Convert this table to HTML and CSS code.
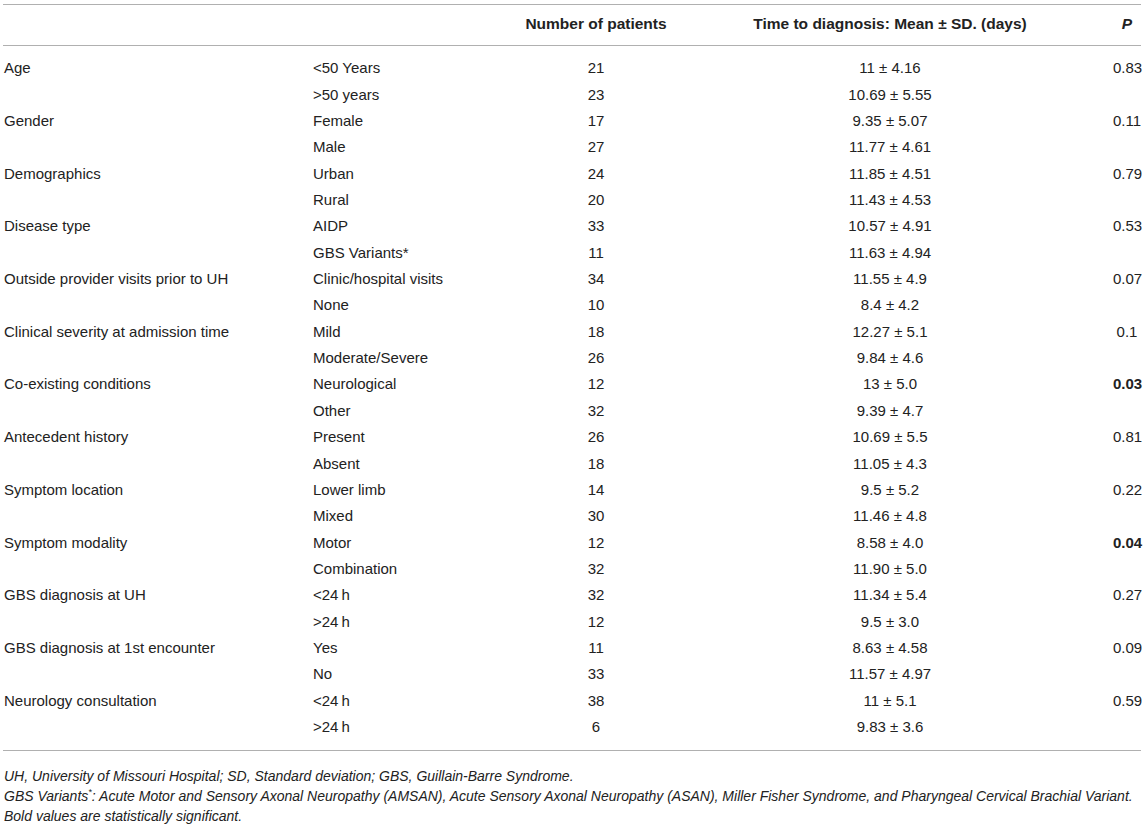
FILE: index.html
```html
<!DOCTYPE html>
<html><head>
<meta charset="utf-8">
<title>Time to diagnosis</title>
<link rel="stylesheet" href="styles.css">
</head>
<body>
<table class="tbl">
  <colgroup>
    <col class="c1"><col class="c2"><col class="c3"><col class="c4"><col class="c5">
  </colgroup>
  <thead>
    <tr><th></th><th></th><th class="ctr">Number of patients</th><th class="ctr">Time to diagnosis: Mean &plusmn; SD. (days)</th><th class="ctr"><i>P</i></th></tr>
  </thead>
  <tbody>
    <tr class="first"><td>Age</td><td>&lt;50 Years</td><td class="ctr">21</td><td class="ctr">11 &plusmn; 4.16</td><td class="ctr">0.83</td></tr>
    <tr><td></td><td>&gt;50 years</td><td class="ctr">23</td><td class="ctr">10.69 &plusmn; 5.55</td><td></td></tr>
    <tr><td>Gender</td><td>Female</td><td class="ctr">17</td><td class="ctr">9.35 &plusmn; 5.07</td><td class="ctr">0.11</td></tr>
    <tr><td></td><td>Male</td><td class="ctr">27</td><td class="ctr">11.77 &plusmn; 4.61</td><td></td></tr>
    <tr><td>Demographics</td><td>Urban</td><td class="ctr">24</td><td class="ctr">11.85 &plusmn; 4.51</td><td class="ctr">0.79</td></tr>
    <tr><td></td><td>Rural</td><td class="ctr">20</td><td class="ctr">11.43 &plusmn; 4.53</td><td></td></tr>
    <tr><td>Disease type</td><td>AIDP</td><td class="ctr">33</td><td class="ctr">10.57 &plusmn; 4.91</td><td class="ctr">0.53</td></tr>
    <tr><td></td><td>GBS Variants*</td><td class="ctr">11</td><td class="ctr">11.63 &plusmn; 4.94</td><td></td></tr>
    <tr><td>Outside provider visits prior to UH</td><td>Clinic/hospital visits</td><td class="ctr">34</td><td class="ctr">11.55 &plusmn; 4.9</td><td class="ctr">0.07</td></tr>
    <tr><td></td><td>None</td><td class="ctr">10</td><td class="ctr">8.4 &plusmn; 4.2</td><td></td></tr>
    <tr><td>Clinical severity at admission time</td><td>Mild</td><td class="ctr">18</td><td class="ctr">12.27 &plusmn; 5.1</td><td class="ctr">0.1</td></tr>
    <tr><td></td><td>Moderate/Severe</td><td class="ctr">26</td><td class="ctr">9.84 &plusmn; 4.6</td><td></td></tr>
    <tr><td>Co-existing conditions</td><td>Neurological</td><td class="ctr">12</td><td class="ctr">13 &plusmn; 5.0</td><td class="ctr"><b>0.03</b></td></tr>
    <tr><td></td><td>Other</td><td class="ctr">32</td><td class="ctr">9.39 &plusmn; 4.7</td><td></td></tr>
    <tr><td>Antecedent history</td><td>Present</td><td class="ctr">26</td><td class="ctr">10.69 &plusmn; 5.5</td><td class="ctr">0.81</td></tr>
    <tr><td></td><td>Absent</td><td class="ctr">18</td><td class="ctr">11.05 &plusmn; 4.3</td><td></td></tr>
    <tr><td>Symptom location</td><td>Lower limb</td><td class="ctr">14</td><td class="ctr">9.5 &plusmn; 5.2</td><td class="ctr">0.22</td></tr>
    <tr><td></td><td>Mixed</td><td class="ctr">30</td><td class="ctr">11.46 &plusmn; 4.8</td><td></td></tr>
    <tr><td>Symptom modality</td><td>Motor</td><td class="ctr">12</td><td class="ctr">8.58 &plusmn; 4.0</td><td class="ctr"><b>0.04</b></td></tr>
    <tr><td></td><td>Combination</td><td class="ctr">32</td><td class="ctr">11.90 &plusmn; 5.0</td><td></td></tr>
    <tr><td>GBS diagnosis at UH</td><td>&lt;24&#8201;h</td><td class="ctr">32</td><td class="ctr">11.34 &plusmn; 5.4</td><td class="ctr">0.27</td></tr>
    <tr><td></td><td>&gt;24&#8201;h</td><td class="ctr">12</td><td class="ctr">9.5 &plusmn; 3.0</td><td></td></tr>
    <tr><td>GBS diagnosis at 1st encounter</td><td>Yes</td><td class="ctr">11</td><td class="ctr">8.63 &plusmn; 4.58</td><td class="ctr">0.09</td></tr>
    <tr><td></td><td>No</td><td class="ctr">33</td><td class="ctr">11.57 &plusmn; 4.97</td><td></td></tr>
    <tr><td>Neurology consultation</td><td>&lt;24&#8201;h</td><td class="ctr">38</td><td class="ctr">11 &plusmn; 5.1</td><td class="ctr">0.59</td></tr>
    <tr class="last"><td></td><td>&gt;24&#8201;h</td><td class="ctr">6</td><td class="ctr">9.83 &plusmn; 3.6</td><td></td></tr>
  </tbody>
</table>
<div class="notes">
  <p>UH, University of Missouri Hospital; SD, Standard deviation; GBS, Guillain-Barre Syndrome.</p>
  <p>GBS Variants<sup>*</sup>: Acute Motor and Sensory Axonal Neuropathy (AMSAN), Acute Sensory Axonal Neuropathy (ASAN), Miller Fisher Syndrome, and Pharyngeal Cervical Brachial Variant.</p>
  <p>Bold values are statistically significant.</p>
</div>
</body>
</html>
```

FILE: styles.css
```css
body {
  margin: 0;
  padding: 4px 4px 0 3px;
  background: #fff;
  color: #222;
  font-family: "Liberation Sans", Arial, sans-serif;
  font-size: 15px;
}

.tbl {
  width: 1138px;
  border-collapse: collapse;
  table-layout: fixed;
}
.c1 { width: 310px; }
.c2 { width: 212px; }
.c3 { width: 142px; }
.c4 { width: 446px; }
.c5 { width: 28px; }

.tbl th, .tbl td {
  padding: 0;
  text-align: left;
  white-space: nowrap;
  font-weight: normal;
}
.tbl td:first-child { padding-left: 1px; }
.tbl thead th {
  font-weight: bold;
  font-size: 15.5px;
  height: 38px;
  padding-bottom: 2px;
  border-top: 1px solid #b0b0b0;
  border-bottom: 1px solid #b0b0b0;
}
.tbl thead th i { font-style: italic; }
.tbl td { height: 26.36px; line-height: 16px; }
.tbl .first td { padding-top: 9px; }
.tbl .last td { padding-bottom: 10px; border-bottom: 1px solid #b0b0b0; }
.tbl .ctr { text-align: center; }
.tbl b { font-weight: bold; }

.notes {
  padding: 15px 0 0 1px;
  font-style: italic;
  font-size: 14px;
  line-height: 20px;
}
.notes p { margin: 0; }
.notes sup { font-size: 9px; line-height: 0; }
```
